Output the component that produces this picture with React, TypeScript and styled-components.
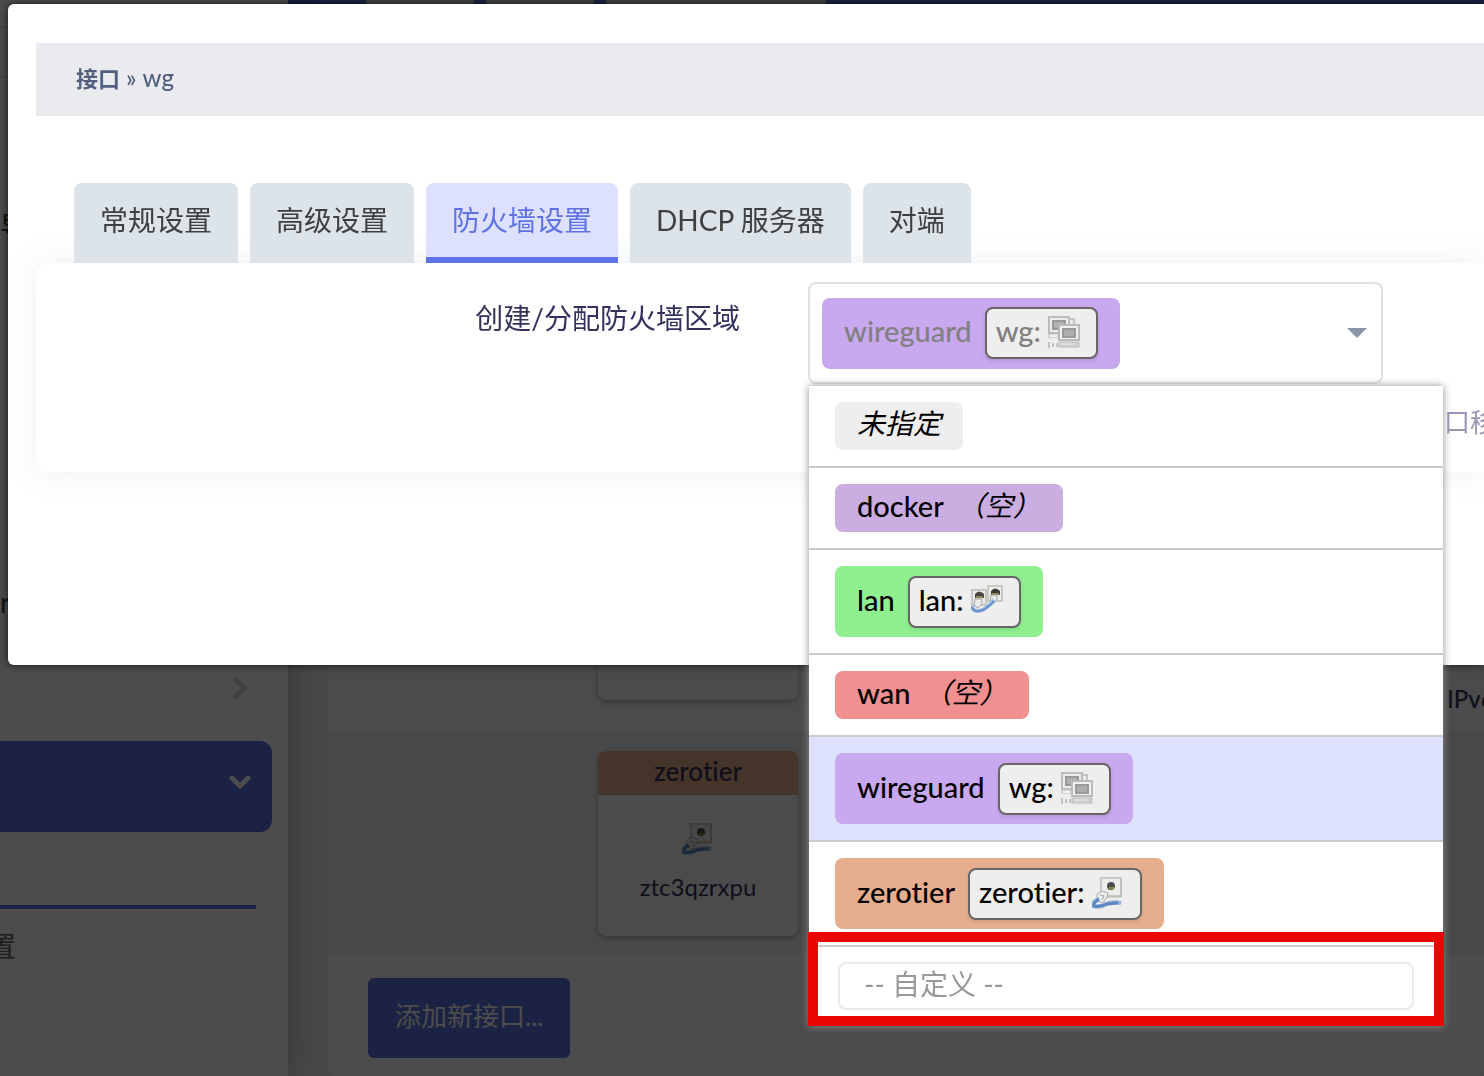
import React from "react";
import styled, { createGlobalStyle } from "styled-components";

const GlobalStyle = createGlobalStyle`
  *, *::before, *::after { box-sizing: border-box; }
  html, body { margin: 0; height: 100%; overflow: hidden; }
  body {
    font-family: Lato, "Noto Sans CJK SC", sans-serif;
    font-variant-ligatures: none;
    font-size: 28px;
    font-weight: 400;
    line-height: 40px;
    color: #32325d;
    background: #edf2f0;
  }
  button, input { font: inherit; font-variant-ligatures: none; }
  ul, h4, p { margin: 0; padding: 0; }
`;

/* ---------- page behind the dialog ---------- */

const Page = styled.div`
  display: flex;
  height: 100vh;
  overflow: hidden;
`;

const Sidebar = styled.nav`
  position: relative;
  z-index: 1;
  flex: 0 0 288px;
  display: flex;
  flex-direction: column;
  background: #ffffff;
  box-shadow: 0 0 32px rgba(0, 0, 0, 0.28);
`;

const Brand = styled.div`
  height: 177px;
  padding-top: 26px;
`;

const BrandLine = styled.div`
  height: 50px;
  border-top: 2px solid #e6e6e6;
`;

const MenuItem = styled.a<{ $active?: boolean }>`
  display: flex;
  align-items: flex-start;
  justify-content: space-between;
  flex: 0 0 91px;
  margin: 0 16px 3px 0;
  padding: 29px 20px 0 0;
  border-radius: 0 12px 12px 0;
  color: #404040;
  text-decoration: none;
  background: ${(p) => (p.$active ? "#5e72e4" : "transparent")};
  svg { flex: none; }
`;

const SubItem = styled.a<{ $current?: boolean }>`
  display: flex;
  align-items: center;
  justify-content: flex-end;
  width: ${(p) => (p.$current ? "256px" : "16px")};
  height: ${(p) => (p.$current ? "74px" : "78px")};
  color: #666666;
  text-decoration: none;
  border-bottom: 4px solid ${(p) => (p.$current ? "#5e72e4" : "transparent")};
  overflow: hidden;
`;

const Content = styled.main`
  flex: 1;
  min-width: 0;
  display: flex;
  flex-direction: column;
`;

const TopBar = styled.header`
  display: flex;
  align-items: flex-start;
  gap: 12px;
  height: 120px;
  padding-left: 78px;
  background: #5e72e4;
`;

const TopTab = styled.span<{ $width: number }>`
  width: ${(p) => p.$width}px;
  height: 40px;
  background: #dce3e9;
`;

const Card = styled.section`
  margin-left: 40px;
  background: #ffffff;
  border-radius: 8px;
`;

const InterfaceRow = styled.div<{ $alt?: boolean; $height: number }>`
  display: flex;
  align-items: flex-end;
  min-height: ${(p) => p.$height}px;
  padding: 16px 0 ${(p) => (p.$alt ? 18 : 14)}px 270px;
  background: ${(p) => (p.$alt ? "#f5f5f5" : "#fcfcfc")};
  border-bottom: ${(p) => (p.$alt ? 0 : 2)}px solid #e8e8e8;
`;

const InterfaceCard = styled.div<{ $raised?: boolean }>`
  width: 200px;
  min-height: 185px;
  margin-bottom: ${(p) => (p.$raised ? 19 : 0)}px;
  display: flex;
  flex-direction: column;
  align-items: center;
  border-radius: 8px;
  background: #fcfcfc;
  box-shadow: 0 2px 6px rgba(0, 0, 0, 0.3);
  overflow: hidden;
  font-size: 24px;
`;

const InterfaceName = styled.div`
  align-self: stretch;
  height: 44px;
  margin-bottom: 28px;
  text-align: center;
  font-size: 26px;
  font-weight: 500;
  background: #e7ae8e;
`;

const DeviceName = styled.div`
  margin-top: 12px;
`;

const InterfaceInfo = styled.div`
  width: 37px;
  margin-left: auto;
  overflow: hidden;
  white-space: nowrap;
  font-size: 24px;
  font-weight: 500;
`;

const CardFooter = styled.footer`
  padding: 24px 40px 18px;
`;

const AddButton = styled.button`
  height: 80px;
  padding: 0 27px 4px;
  border: 0;
  border-radius: 6px;
  color: #ffffff;
  background: #5e72e4;
  font-size: 26px;
`;

const Shade = styled.div`
  position: fixed;
  inset: 0;
  z-index: 5;
  background: rgba(0, 0, 0, 0.7);
`;

/* ---------- dialog ---------- */

const Dialog = styled.div`
  position: absolute;
  z-index: 10;
  top: 4px;
  left: 8px;
  right: 0;
  padding: 39px 0 193px 28px;
  border-radius: 6px 0 0 6px;
  background: #ffffff;
  box-shadow: 0 0 8px rgba(0, 0, 0, 0.7);
`;

const Breadcrumb = styled.h4`
  padding: 15px 40px 17px;
  font-size: 24px;
  font-weight: 500;
  color: #525f7f;
  background: #eaebef;
  b { font-size: 22px; font-weight: 700; }
`;

const Tabs = styled.div`
  position: relative;
  z-index: 1;
  display: flex;
  gap: 12px;
  margin-top: 67px;
  padding-left: 38px;
`;

const Tab = styled.button<{ $active?: boolean }>`
  height: 80px;
  padding: 0 26px ${(p) => (p.$active ? 0 : 6)}px;
  border: 0;
  border-bottom: ${(p) => (p.$active ? 6 : 0)}px solid #5e72e4;
  border-radius: 8px 8px 0 0;
  white-space: nowrap;
  color: ${(p) => (p.$active ? "#5e72e4" : "#404040")};
  background: ${(p) => (p.$active ? "#dde1fe" : "#dce3e9")};
`;

const Panel = styled.div`
  display: flex;
  align-items: flex-start;
  padding: 19px 0 32px;
  border-radius: 12px 0 0 12px;
  background: #ffffff;
  box-shadow: 0 0 32px rgba(136, 152, 170, 0.15);
`;

const FieldLabel = styled.label`
  flex: 0 0 50%;
  padding: 16px 20px 0 0;
  text-align: right;
`;

const Field = styled.div`
  flex: 1;
  min-width: 0;
  padding-left: 48px;
`;

const ZoneSelect = styled.div`
  position: relative;
  max-width: 575px;
`;

const SelectBox = styled.button`
  display: flex;
  align-items: center;
  justify-content: space-between;
  width: 100%;
  height: 102px;
  padding: 0 14px 0 12px;
  border: 2px solid #dee2e6;
  border-radius: 8px;
  color: #808080;
  background: #ffffff;
`;

const Help = styled.p`
  margin-top: 20px;
  padding-left: 636px;
  line-height: 36px;
  font-size: 26px;
  color: #9997b4;
  white-space: nowrap;
  overflow: hidden;
`;

const ZoneBadge = styled.span<{ $color: string; $tall?: boolean }>`
  display: inline-flex;
  align-items: center;
  gap: 13px;
  height: ${(p) => (p.$tall ? 71 : 48)}px;
  padding: 0 22px;
  border-radius: 8px;
  background: ${(p) => p.$color};
  font-size: 29px;
  font-weight: 500;
  em { font-size: 28px; font-weight: 400; padding-bottom: 6px; }
`;

const ZoneName = styled.span`
  padding-bottom: 4px;
`;

const Chip = styled.span`
  display: inline-flex;
  align-items: center;
  gap: 7px;
  height: 52px;
  padding: 0 16px 2px 9px;
  border: 2px solid #666666;
  border-radius: 8px;
  background: #eeeeee;
  box-shadow: 0 2px 4px rgba(0, 0, 0, 0.1);
  font-weight: 500;
`;

const ChipLabel = styled.span`
  padding-bottom: 2px;
`;

const Menu = styled.div`
  position: absolute;
  z-index: 2;
  top: 104px;
  left: 1px;
  right: -60px;
  color: #000000;
  background: #ffffff;
  box-shadow: 0 0 8px #918e8c;
`;

const Options = styled.ul`
  list-style: none;
`;

const Option = styled.li<{ $selected?: boolean }>`
  display: flex;
  padding: 16px 26px;
  border-bottom: 2px solid #cccccc;
  background: ${(p) => (p.$selected ? "#dde1fe" : "#ffffff")};
`;

const CustomRow = styled.div`
  padding: 15px 29px 16px;
`;

const CustomInput = styled.input`
  display: block;
  width: 100%;
  height: 48px;
  padding: 0 24px 4px;
  border: 2px solid #e9eaef;
  border-radius: 8px;
  outline: 0;
  background: #ffffff;
  &::placeholder { color: #999999; opacity: 1; }
`;

const Marker = styled.div`
  position: absolute;
  left: -1px;
  right: -1px;
  bottom: 0;
  height: 94px;
  border: 10px solid #eb0606;
  pointer-events: none;
`;

/* ---------- icons ---------- */

const TunnelIcon = () => (
  <svg width="32" height="32" viewBox="0 0 32 32" aria-hidden="true">
    <path d="M21 3h5v6h-5z" fill="#ececec" stroke="#c4c4c4" strokeWidth="2" />
    <rect x="1" y="1" width="20" height="16" fill="#ececec" stroke="#bcbcbc" strokeWidth="2" />
    <rect x="5" y="5" width="12" height="8" fill="#b0b0b0" stroke="#999999" strokeWidth="2" />
    <path d="M0 18h12v4H0z" fill="#d2d2d2" />
    <path d="M2 20h7" stroke="#f3f3f3" strokeWidth="2" />
    <path d="M1 26v6M5 27v4M9 27v4" stroke="#c2c2c2" strokeWidth="2" />
    <rect x="11" y="9" width="20" height="15" fill="#f0f0f0" stroke="#bababa" strokeWidth="2" />
    <rect x="15" y="13" width="12" height="8" fill="#adadad" stroke="#999999" strokeWidth="2" />
    <rect x="11" y="26" width="20" height="5" fill="#d0d0d0" stroke="#bebebe" strokeWidth="1" />
    <path d="M13 28h12" stroke="#dedede" strokeWidth="2" />
  </svg>
);

const BridgeIcon = () => (
  <svg width="32" height="32" viewBox="0 0 32 32" aria-hidden="true">
    <rect x="17" y="1" width="14" height="15" fill="#eeeeeb" stroke="#c8c8c5" strokeWidth="2" />
    <rect x="1" y="5" width="14" height="15" fill="#ececea" stroke="#c6c6c3" strokeWidth="2" />
    <path d="M20 10V6q4-5 9 0v4z" fill="#3b3b38" />
    <path d="M21 9h7" stroke="#8b8452" strokeWidth="2" />
    <path d="M4 13V9q4-5 9 0v4z" fill="#45453f" />
    <path d="M5 12h7" stroke="#8b8452" strokeWidth="2" />
    <path d="M20 10h6v5l-4 4-3-3z" fill="#e9e9e9" stroke="#a2a2a2" strokeWidth="1" />
    <path d="M4 14h7v5l-4 4-4-3z" fill="#e9e9e9" stroke="#a2a2a2" strokeWidth="1" />
    <path d="M2 20Q0 25 7 26Q14 26 23 15" fill="none" stroke="#a3bde0" strokeWidth="4" />
    <path d="M1 22Q2 27 8 26Q15 25 23 16" fill="none" stroke="#6392cf" strokeWidth="2" />
  </svg>
);

const EthernetIcon = () => (
  <svg width="32" height="32" viewBox="0 0 32 32" aria-hidden="true">
    <rect x="9" y="1" width="20" height="18" fill="#ededea" stroke="#c8c8c5" strokeWidth="2" />
    <path d="M29 2v18H12" fill="none" stroke="#b4b4b1" strokeWidth="1" />
    <circle cx="19" cy="9" r="4" fill="#4a4d4f" />
    <path d="M17 11h5" stroke="#968732" strokeWidth="2" />
    <path d="M5 17l5-3 6 2-1 4-4 6-6-2z" fill="#ececec" stroke="#acacac" strokeWidth="1" />
    <path d="M8 18l4 1-2 4" fill="none" stroke="#9aa0a6" strokeWidth="1" />
    <path d="M7 22Q0 25 1 29Q8 31 14 27Q20 24 29 26" fill="none" stroke="#8eafd8" strokeWidth="4" />
    <path d="M7 22Q1 26 2 29Q9 30 15 27L26 26" fill="none" stroke="#5b87c2" strokeWidth="3" />
  </svg>
);

const ChevronRight = () => (
  <svg width="24" height="24" viewBox="0 0 24 24" fill="none" stroke="#d0d3d8" strokeWidth="5" strokeLinecap="round" aria-hidden="true">
    <path d="M8 4l8 8-8 8" />
  </svg>
);

const ChevronDown = () => (
  <svg width="24" height="24" viewBox="0 0 24 24" fill="none" stroke="#ffffff" strokeWidth="5" strokeLinecap="round" aria-hidden="true">
    <path d="M4 8l8 8 8-8" />
  </svg>
);

const Caret = () => (
  <svg width="20" height="10" viewBox="0 0 20 10" aria-hidden="true">
    <path d="M0 0h20L10 10z" fill="#8898aa" />
  </svg>
);

/* ---------- data ---------- */

type Zone = {
  name?: string;
  color: string;
  note?: string;
  device?: string;
  icon?: React.ReactNode;
};

const zones: Zone[] = [
  { color: "#eeeeee", note: "未指定" },
  { name: "docker", color: "#cbaee1", note: "（空）" },
  { name: "lan", color: "#90f090", device: "lan:", icon: <BridgeIcon /> },
  { name: "wan", color: "#f09090", note: "（空）" },
  { name: "wireguard", color: "#c8a8ee", device: "wg:", icon: <TunnelIcon /> },
  { name: "zerotier", color: "#e7ae8e", device: "zerotier:", icon: <EthernetIcon /> },
];

const tabs = ["常规设置", "高级设置", "防火墙设置", "DHCP 服务器", "对端"];

const ZoneView = ({ zone }: { zone: Zone }) => (
  <ZoneBadge $color={zone.color} $tall={!!zone.device}>
    {zone.name && <ZoneName>{zone.name}</ZoneName>}
    {zone.note && <em>{zone.note}</em>}
    {zone.device && (
      <Chip>
        <ChipLabel>{zone.device}</ChipLabel>
        {zone.icon}
      </Chip>
    )}
  </ZoneBadge>
);

export default function App() {
  const selected = zones[4];
  return (
    <>
      <GlobalStyle />
      <Page>
        <Sidebar>
          <Brand>
            <BrandLine />
            <BrandLine />
          </Brand>
          <MenuItem href="#">导</MenuItem>
          <MenuItem href="#" />
          <MenuItem href="#" />
          <MenuItem href="#" />
          <MenuItem href="#">r</MenuItem>
          <MenuItem href="#"><span /><ChevronRight /></MenuItem>
          <MenuItem href="#" $active><span /><ChevronDown /></MenuItem>
          <SubItem href="#" $current />
          <SubItem href="#">置</SubItem>
        </Sidebar>
        <Content>
          <TopBar>
            <TopTab $width={108} />
            <TopTab $width={108} />
            <TopTab $width={220} />
          </TopBar>
          <Card>
            <InterfaceRow $height={615}>
              <InterfaceCard $raised />
              <InterfaceInfo>IPv6</InterfaceInfo>
            </InterfaceRow>
            <InterfaceRow $alt $height={219}>
              <InterfaceCard>
                <InterfaceName>zerotier</InterfaceName>
                <EthernetIcon />
                <DeviceName>ztc3qzrxpu</DeviceName>
              </InterfaceCard>
            </InterfaceRow>
            <CardFooter>
              <AddButton type="button">添加新接口...</AddButton>
            </CardFooter>
          </Card>
        </Content>
      </Page>
      <Shade />
      <Dialog role="dialog" aria-labelledby="dialog-title">
        <Breadcrumb id="dialog-title"><b>接口</b> » wg</Breadcrumb>
        <Tabs role="tablist">
          {tabs.map((t, i) => (
            <Tab key={t} type="button" role="tab" aria-selected={i === 2} $active={i === 2}>{t}</Tab>
          ))}
        </Tabs>
        <Panel>
          <FieldLabel htmlFor="zone">创建/分配防火墙区域</FieldLabel>
          <Field>
            <ZoneSelect>
              <SelectBox id="zone" type="button" aria-haspopup="listbox" aria-expanded="true">
                <ZoneView zone={selected} />
                <Caret />
              </SelectBox>
              <Menu>
                <Options role="listbox" aria-label="防火墙区域">
                  {zones.map((z, i) => (
                    <Option key={i} role="option" aria-selected={z === selected} $selected={z === selected}>
                      <ZoneView zone={z} />
                    </Option>
                  ))}
                </Options>
                <CustomRow>
                  <CustomInput type="text" aria-label="自定义" placeholder="-- 自定义 --" />
                </CustomRow>
                <Marker />
              </Menu>
            </ZoneSelect>
            <Help>口移</Help>
          </Field>
        </Panel>
      </Dialog>
    </>
  );
}
